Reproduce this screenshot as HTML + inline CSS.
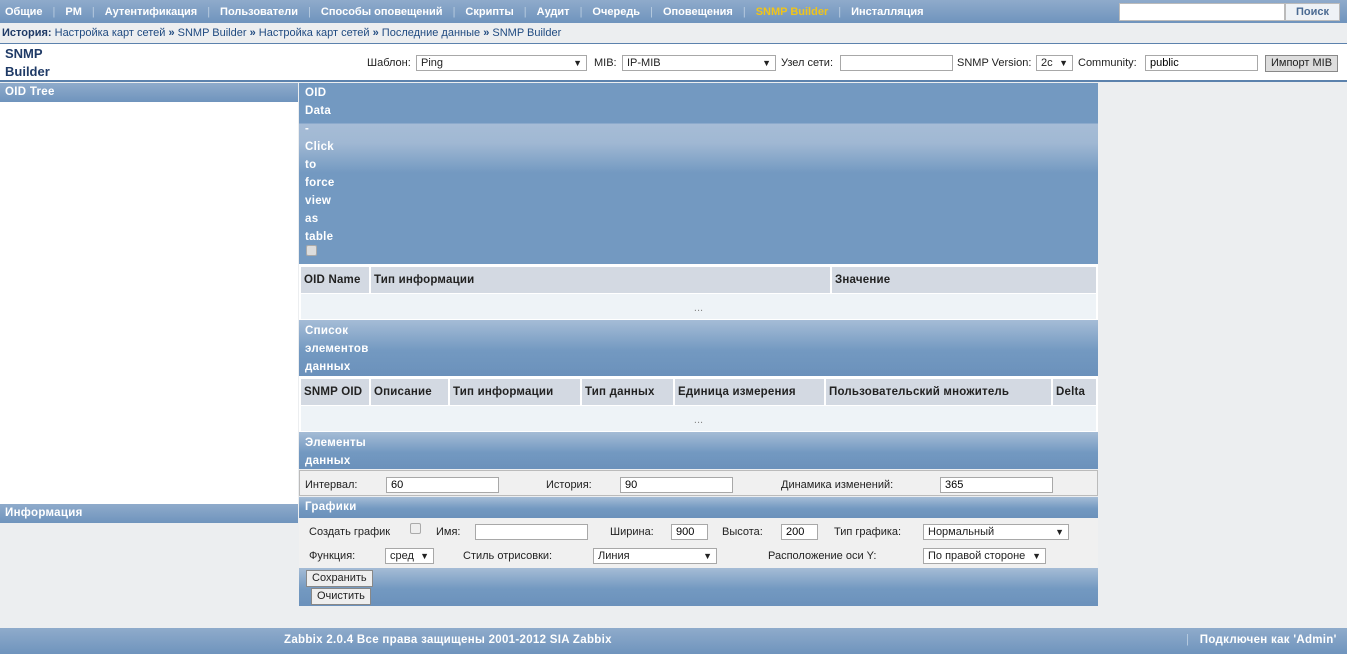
<!DOCTYPE html>
<html><head><meta charset="utf-8"><style>
*{box-sizing:border-box;margin:0;padding:0}
body{width:1347px;height:654px;background:#eceef0;font-family:"Liberation Sans",sans-serif;font-size:11px;color:#222;position:relative;overflow:hidden}
.a{position:absolute;white-space:nowrap}
.bh{background:linear-gradient(#a5bcd6,#7399c1 55%,#6b91bb)}
.bar{background:linear-gradient(#8fabcb,#6f94bd)}
.w{color:#fff;font-weight:bold;font-size:11.5px;letter-spacing:0.3px}
.nav{font-size:11px;letter-spacing:0}
.nav span{margin:0 5px}
.sep{color:#b9cce0;font-weight:normal}
input.t{position:absolute;height:16px;border:1px solid #a8a8a8;background:#fff;font:11px "Liberation Sans",sans-serif;padding:1px 4px}
.sel{position:absolute;height:16px;border:1px solid #a8a8a8;background:#fff;font:11px "Liberation Sans",sans-serif;padding:1px 4px;line-height:12px}
.sel b{position:absolute;right:4px;top:1px;font-size:9px}
.lab{position:absolute;font:11px "Liberation Sans",sans-serif;color:#222;white-space:nowrap}
.th{position:absolute;background:#d3d9e2;font-weight:bold;height:26px;line-height:26px;padding-left:3px;font-size:11.5px;white-space:nowrap;letter-spacing:0.2px}
.btn{position:absolute;background:#eee;border:1px solid #888;font:11px "Liberation Sans",sans-serif;padding:1px 5px;height:17px;line-height:13px}
</style></head><body>
<div class="a bar" style="left:0;top:0;width:1347px;height:23px"></div>
<div class="a w nav" style="left:0;top:6px"><span>Общие</span><span class="sep">|</span><span>PM</span><span class="sep">|</span><span>Аутентификация</span><span class="sep">|</span><span>Пользователи</span><span class="sep">|</span><span>Способы оповещений</span><span class="sep">|</span><span>Скрипты</span><span class="sep">|</span><span>Аудит</span><span class="sep">|</span><span>Очередь</span><span class="sep">|</span><span>Оповещения</span><span class="sep">|</span><span style="color:#f0c419">SNMP Builder</span><span class="sep">|</span><span>Инсталляция</span></div>
<div class="a" style="left:1119px;top:3px;width:166px;height:18px;background:#fff;border:1px solid #bbb"></div>
<div class="a" style="left:1285px;top:3px;width:55px;height:18px;background:#eef2f6;border:1px solid #bbb;color:#4a6a92;font-weight:bold;text-align:center;line-height:16px">Поиск</div>
<div class="a" style="left:0;top:23px;width:1347px;height:20px;background:#eceef0;font:11px 'Liberation Sans',sans-serif;line-height:20px;padding-left:2px;color:#1f4a80"><b style="color:#1f3a66">История:</b> Настройка карт сетей <b>»</b> SNMP Builder <b>»</b> Настройка карт сетей <b>»</b> Последние данные <b>»</b> SNMP Builder</div>
<div class="a" style="left:0;top:43px;width:1347px;height:39px;background:#fff;border-top:1px solid #5c82ad;border-bottom:2px solid #5c82ad"></div>
<div class="a" style="left:5px;top:45px;color:#1f3a66;font-weight:bold;font-size:13px;line-height:18px">SNMP<br>Builder</div>
<span class="lab" style="left:367px;top:57px">Шаблон:</span><div class="sel" style="left:416px;top:55px;width:171px">Ping<b>▼</b></div>
<span class="lab" style="left:594px;top:57px">MIB:</span><div class="sel" style="left:622px;top:55px;width:154px">IP-MIB<b>▼</b></div>
<span class="lab" style="left:781px;top:57px">Узел сети:</span><input class="t" style="left:840px;top:55px;width:113px">
<span class="lab" style="left:957px;top:57px">SNMP Version:</span><div class="sel" style="left:1036px;top:55px;width:37px">2c<b>▼</b></div>
<span class="lab" style="left:1078px;top:57px">Community:</span><input class="t" style="left:1145px;top:55px;width:113px" value="public">
<div class="btn" style="left:1265px;top:55px;background:#ddd">Импорт MIB</div>
<div class="a bar w" style="left:0;top:83px;width:298px;height:19px;line-height:19px;padding-left:5px">OID Tree</div>
<div class="a" style="left:0;top:102px;width:298px;height:402px;background:#fff"></div>
<div class="a bar w" style="left:0;top:504px;width:298px;height:19px;line-height:19px;padding-left:5px">Информация</div>
<div class="a" style="left:299px;top:83px;width:799px;height:181px;background:linear-gradient(#7399c1 0,#7399c1 40px,#a6bcd6 41px,#a0b8d3 60px,#7399c1 90px,#7399c1)"></div>
<div class="a w" style="left:305px;top:84px;line-height:18px">OID<br>Data<br>-<br>Click<br>to<br>force<br>view<br>as<br>table</div>
<div class="a" style="left:306px;top:245px;width:11px;height:11px;background:#ddd;border:1px solid #aaa;border-radius:2px"></div>
<div class="a" style="left:299px;top:264px;width:799px;height:56px;background:#fff"></div>
<div class="th" style="left:301px;top:267px;width:68px">OID Name</div>
<div class="th" style="left:371px;top:267px;width:459px">Тип информации</div>
<div class="th" style="left:832px;top:267px;width:264px">Значение</div>
<div class="a" style="left:301px;top:294px;width:795px;height:25px;background:#eef3f7;text-align:center;line-height:28px;color:#888">...</div>
<div class="a bh" style="left:299px;top:320px;width:799px;height:56px"></div>
<div class="a w" style="left:305px;top:322px;line-height:18px">Список<br>элементов<br>данных</div>
<div class="a" style="left:299px;top:376px;width:799px;height:56px;background:#fff"></div>
<div class="th" style="left:301px;top:379px;width:68px">SNMP OID</div>
<div class="th" style="left:371px;top:379px;width:77px">Описание</div>
<div class="th" style="left:450px;top:379px;width:130px">Тип информации</div>
<div class="th" style="left:582px;top:379px;width:91px">Тип данных</div>
<div class="th" style="left:675px;top:379px;width:149px">Единица измерения</div>
<div class="th" style="left:826px;top:379px;width:225px">Пользовательский множитель</div>
<div class="th" style="left:1053px;top:379px;width:43px">Delta</div>
<div class="a" style="left:301px;top:406px;width:795px;height:25px;background:#eef3f7;text-align:center;line-height:28px;color:#888">...</div>
<div class="a bh" style="left:299px;top:432px;width:799px;height:37px"></div>
<div class="a w" style="left:305px;top:434px;line-height:18px">Элементы<br>данных</div>
<div class="a" style="left:299px;top:470px;width:799px;height:26px;background:#f0f0f0;border:1px solid #bbb"></div>
<span class="lab" style="left:305px;top:479px">Интервал:</span><input class="t" style="left:386px;top:477px;width:113px" value="60">
<span class="lab" style="left:546px;top:479px">История:</span><input class="t" style="left:620px;top:477px;width:113px" value="90">
<span class="lab" style="left:781px;top:479px">Динамика изменений:</span><input class="t" style="left:940px;top:477px;width:113px" value="365">
<div class="a bh w" style="left:299px;top:497px;width:799px;height:21px;line-height:21px;padding-left:6px">Графики</div>
<div class="a" style="left:299px;top:518px;width:799px;height:50px;background:#f0f0f0"></div>
<span class="lab" style="left:309px;top:526px">Создать график</span>
<div class="a" style="left:410px;top:523px;width:11px;height:11px;background:#eee;border:1px solid #aaa;border-radius:2px"></div>
<span class="lab" style="left:436px;top:526px">Имя:</span><input class="t" style="left:475px;top:524px;width:113px">
<span class="lab" style="left:610px;top:526px">Ширина:</span><input class="t" style="left:671px;top:524px;width:37px" value="900">
<span class="lab" style="left:722px;top:526px">Высота:</span><input class="t" style="left:781px;top:524px;width:37px" value="200">
<span class="lab" style="left:834px;top:526px">Тип графика:</span><div class="sel" style="left:923px;top:524px;width:146px">Нормальный<b>▼</b></div>
<span class="lab" style="left:309px;top:550px">Функция:</span><div class="sel" style="left:385px;top:548px;width:49px">сред<b>▼</b></div>
<span class="lab" style="left:463px;top:550px">Стиль отрисовки:</span><div class="sel" style="left:593px;top:548px;width:124px">Линия<b>▼</b></div>
<span class="lab" style="left:768px;top:550px">Расположение оси Y:</span><div class="sel" style="left:923px;top:548px;width:123px">По правой стороне<b>▼</b></div>
<div class="a bh" style="left:299px;top:568px;width:799px;height:38px"></div>
<div class="btn" style="left:306px;top:570px">Сохранить</div>
<div class="btn" style="left:311px;top:588px">Очистить</div>
<div class="a bar" style="left:0;top:628px;width:1347px;height:26px"></div>
<div class="a w" style="left:284px;top:634px">Zabbix 2.0.4 Все права защищены 2001-2012 SIA Zabbix</div>
<div class="a w" style="left:1186px;top:634px"><span class="sep">|</span>&nbsp;&nbsp; Подключен как 'Admin'</div>
</body></html>
